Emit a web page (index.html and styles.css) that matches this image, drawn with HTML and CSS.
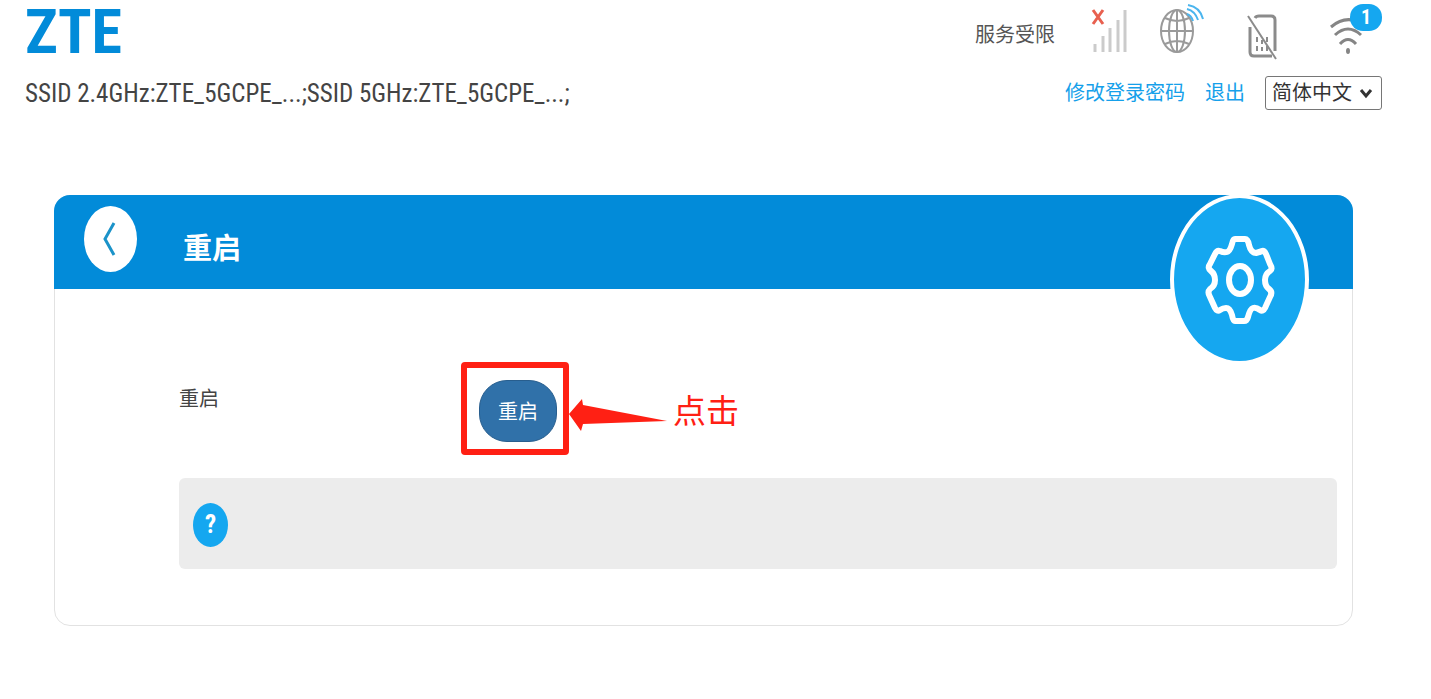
FILE: index.html
```html
<!DOCTYPE html>
<html lang="zh-CN">
<head>
    <meta charset="UTF-8">
    <meta name="viewport" content="width=device-width, initial-scale=1.0">
    <title>重启</title>
    <link rel="stylesheet" href="styles.css">
</head>
<body>
    <header class="header">
        <div class="brand">
            <div class="logo">ZTE</div>
            <div class="ssid">SSID 2.4GHz:ZTE_5GCPE_...;SSID 5GHz:ZTE_5GCPE_...;</div>
        </div>
        <div class="tools">
            <div class="status">
                <span class="network">服务受限</span>
                <svg class="signal" width="38" height="48" viewBox="0 0 38 48">
                    <path d="M2 6 L12 20 M12 6 L2 20" stroke="#e8604f" stroke-width="3" fill="none"/>
                    <path d="M4 40 V48 M12 32 V48 M19 24 V48 M27 16 V48 M34 6 V48" stroke="#cbcbcb" stroke-width="3"/>
                </svg>
                <svg class="globe" width="46" height="52" viewBox="0 0 46 52">
                    <g fill="none" stroke="#9a9a9a" stroke-width="2">
                        <ellipse cx="18" cy="27" rx="16" ry="21"/>
                        <ellipse cx="18" cy="27" rx="8" ry="21"/>
                        <path d="M2 27 H34 M18 6 V48 M6 14 Q18 20 30 14 M6 40 Q18 34 30 40"/>
                    </g>
                    <g fill="none" stroke="#4bb5ee" stroke-width="2">
                        <path d="M28 10 Q32 11 34 17 M28 5 Q36 7 39 16 M29 1 Q41 3 44 15"/>
                    </g>
                </svg>
                <svg class="sim" width="32" height="48" viewBox="0 0 32 48">
                    <g fill="none" stroke="#8b8b8b">
                        <path d="M8 5 Q9 3 12 3 H24 Q28 3 28 7 V38 M25 43 H7 Q3 43 3 39 V14" stroke-width="3"/>
                        <path d="M1 3 L29 46" stroke-width="2"/>
                        <path d="M10 24 V29 M10 33 V38 M15 27 V31 M15 34 V38 M20 24 V29 M20 33 V38" stroke-width="2"/>
                    </g>
                </svg>
                <div class="wifi">
                    <svg width="36" height="42" viewBox="0 0 36 42">
                        <g fill="none" stroke="#858585" stroke-width="3">
                            <path d="M2 12 Q17 -1 34 9"/>
                            <path d="M6 20 Q19 8 32 20"/>
                            <path d="M11 29 Q19 20 27 29"/>
                        </g>
                        <ellipse cx="19" cy="36" rx="2" ry="3" fill="#858585"/>
                    </svg>
                    <span class="badge">1</span>
                </div>
            </div>
            <nav class="links">
                <a href="#">修改登录密码</a>
                <a href="#">退出</a>
                <div class="language">
                    <select aria-label="语言">
                        <option>简体中文</option>
                        <option>English</option>
                    </select>
                    <svg width="14" height="12" viewBox="0 0 14 12">
                        <path d="M2 3 L7 9 L12 3" fill="none" stroke="#333" stroke-width="3"/>
                    </svg>
                </div>
            </nav>
        </div>
    </header>

    <main class="card">
        <div class="card-header">
            <button class="back" type="button" aria-label="返回">
                <svg width="14" height="36" viewBox="0 0 14 36">
                    <path d="M12 2 L3 18 L12 34" fill="none" stroke="#1b93c9" stroke-width="3"/>
                </svg>
            </button>
            <h1>重启</h1>
            <div class="gear">
                <svg width="68" height="90" viewBox="0 0 68 90">
                    <g fill="none" stroke="#fff" stroke-width="6" stroke-linejoin="round">
                        <path d="M29 4 H39 Q42 4 43 10 Q45 18 50 18 Q54 17 56 16 Q58 15 60 19 L64 29 Q67 34 64 36 Q59 39 59 45 Q59 51 63 54 Q67 57 64 62 L59 73 Q57 77 54 75 Q50 72 47 73 Q44 74 42 82 Q41 86 38 86 H29 Q27 86 26 80 Q24 73 20 73 Q17 73 14 75 Q11 77 9 73 L4 62 Q1 57 4 54 Q9 51 9 45 Q9 39 5 36 Q1 33 4 29 L9 19 Q11 15 14 16 Q18 18 21 17 Q24 16 26 9 Q27 4 29 4 Z"/>
                        <ellipse cx="34" cy="45" rx="11" ry="14"/>
                    </g>
                </svg>
            </div>
        </div>
        <div class="card-body">
            <div class="row">
                <span class="label">重启</span>
                <div class="highlight">
                    <button class="restart" type="button">重启</button>
                </div>
                <svg class="arrow" width="98" height="34" viewBox="0 0 98 34">
                    <path d="M0 16 L13 1 L14 7 L98 23 L14 26 L12 33 Z" fill="#ff2014"/>
                </svg>
                <span class="note">点击</span>
            </div>
            <div class="help">
                <span class="help-icon">?</span>
            </div>
        </div>
    </main>
</body>
</html>
```

FILE: styles.css
```css
* {
    box-sizing: border-box;
}
body {
    margin: 0;
    background-color: #fff;
    color: #444;
    font-family: "Liberation Sans", "Noto Sans CJK SC", sans-serif;
    font-size: 20px;
    line-height: 30px;
}
.header {
    display: flex;
    justify-content: space-between;
    height: 112px;
    padding: 0 49px 0 25px;
}
.brand {
    display: flex;
    flex-direction: column;
}
.logo {
    height: 79px;
    color: #028bd9;
    font-family: "Roboto Condensed", "Liberation Sans", sans-serif;
    font-size: 62px;
    font-weight: bold;
    line-height: 64px;
}
.ssid {
    font-family: "Roboto Condensed", "Liberation Sans", sans-serif;
    font-size: 25px;
}
.tools {
    display: flex;
    flex-direction: column;
    align-items: flex-end;
}
.status {
    display: flex;
    align-items: flex-start;
    height: 76px;
    padding-top: 4px;
}
.network {
    margin: 16px 36px 0 0;
    color: #555;
}
.signal {
    margin-right: 30px;
}
.globe {
    margin-right: 42px;
}
.sim {
    margin: 9px 50px 0 0;
}
.wifi {
    position: relative;
    width: 53px;
    padding-top: 11px;
}
.badge {
    position: absolute;
    top: 0;
    right: 0;
    width: 32px;
    height: 27px;
    border-radius: 13px;
    background-color: #15a7f0;
    color: #fff;
    font-family: "Roboto Condensed", "Liberation Sans", sans-serif;
    font-size: 20px;
    font-weight: bold;
    line-height: 27px;
    text-align: center;
}
.links {
    display: flex;
    align-items: center;
    gap: 20px;
}
.links a {
    color: #15a0ea;
    text-decoration: none;
}
.language {
    position: relative;
}
.language select {
    display: block;
    appearance: none;
    width: 117px;
    height: 34px;
    padding: 0 6px;
    border: 1px solid #767676;
    border-radius: 3px;
    background-color: #fff;
    color: #333;
    font-family: inherit;
    font-size: 20px;
}
.language svg {
    position: absolute;
    top: 11px;
    right: 9px;
    pointer-events: none;
}
.card {
    margin: 83px 78px 0 54px;
    border: 1px solid #e2e2e2;
    border-radius: 16px;
}
.card-header {
    position: relative;
    display: flex;
    align-items: flex-start;
    height: 94px;
    margin: -1px -1px 0;
    padding: 11px 30px;
    border-radius: 16px 16px 0 0;
    background-color: #028bd9;
}
.back {
    display: flex;
    align-items: center;
    justify-content: center;
    width: 53px;
    height: 66px;
    padding: 0 3px 0 0;
    border: none;
    border-radius: 50%;
    background-color: #fff;
    cursor: pointer;
}
.card-header h1 {
    margin: 23px 0 0 46px;
    color: #fff;
    font-size: 29px;
    line-height: 40px;
}
.gear {
    position: absolute;
    top: -1px;
    right: 44px;
    display: flex;
    align-items: center;
    justify-content: center;
    width: 139px;
    height: 171px;
    border: 4px solid #fff;
    border-radius: 50%;
    background-color: #15a7f0;
}
.gear svg {
    overflow: visible;
}
.card-body {
    padding: 73px 15px 56px 124px;
}
.row {
    display: flex;
    align-items: flex-start;
    margin-bottom: 23px;
}
.label {
    width: 282px;
    margin-top: 22px;
}
.highlight {
    width: 108px;
    height: 93px;
    padding: 12px;
    border: 6px solid #ff2014;
    border-radius: 4px;
}
.restart {
    width: 78px;
    height: 62px;
    padding: 0 0 2px;
    border: 1px solid #285e8e;
    border-radius: 28px;
    background-color: #3071a9;
    color: #fff;
    font-family: inherit;
    font-size: 20px;
    cursor: pointer;
}
.arrow {
    margin-top: 36px;
}
.note {
    margin: 30px 0 0 6px;
    color: #ff2014;
    font-size: 33px;
    line-height: 40px;
}
.help {
    height: 91px;
    padding: 25px 14px;
    border-radius: 6px;
    background-color: #ececec;
}
.help-icon {
    display: block;
    width: 35px;
    height: 44px;
    border-radius: 50%;
    background-color: #15a7f0;
    color: #fff;
    font-family: "Roboto Condensed", "Liberation Sans", sans-serif;
    font-size: 25px;
    font-weight: bold;
    line-height: 44px;
    text-align: center;
}
```
